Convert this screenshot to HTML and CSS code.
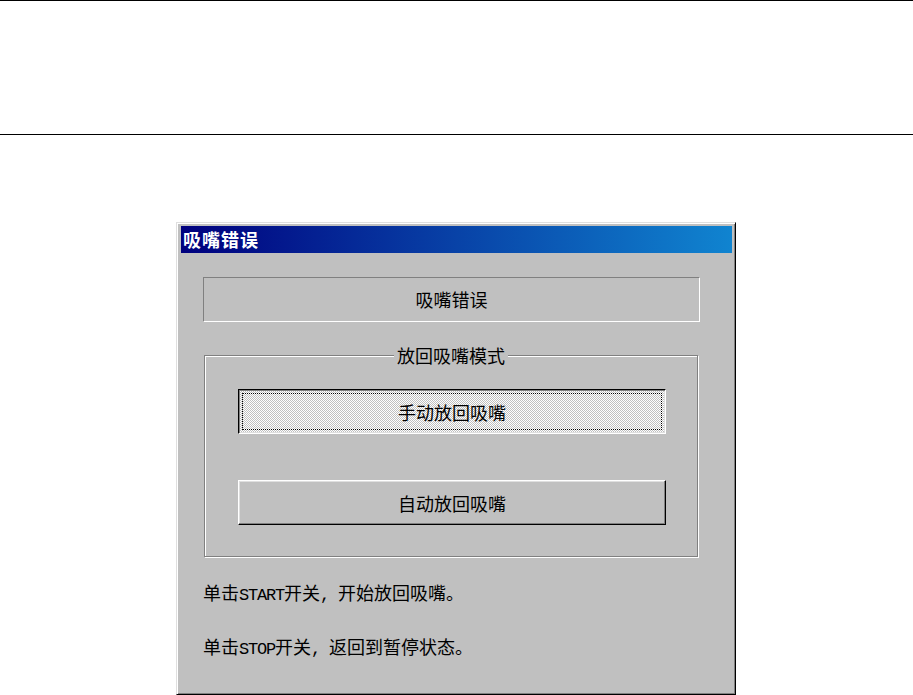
FILE: index.html
```html
<!DOCTYPE html>
<html lang="zh-CN">
<head>
<meta charset="utf-8">
<title>吸嘴错误</title>
<link rel="stylesheet" href="styles.css">
</head>
<body>
  <div class="header"></div>
  <div class="dialog">
    <div class="titlebar">吸嘴错误</div>
    <div class="body">
      <div class="status">吸嘴错误</div>
      <fieldset class="group">
        <legend class="group-title">放回吸嘴模式</legend>
        <button class="btn btn-pressed" type="button">手动放回吸嘴</button>
        <button class="btn btn-second" type="button">自动放回吸嘴</button>
      </fieldset>
      <p class="hint hint-first">单击<span class="asc">START</span>开关<span class="asc">, </span>开始放回吸嘴。</p>
      <p class="hint hint-second">单击<span class="asc">STOP</span>开关<span class="asc">, </span>返回到暂停状态。</p>
    </div>
  </div>
</body>
</html>
```
FILE: styles.css
```css
html, body {
  margin: 0;
  padding: 0;
  background: #fff;
}

body {
  font-family: "Noto Sans CJK SC", "Liberation Sans", sans-serif;
  color: #000;
  width: 913px;
  height: 695px;
  overflow: hidden;
}

.header {
  height: 133px;
  border-top: 1px solid #000;
  border-bottom: 1px solid #000;
}

.dialog {
  box-sizing: border-box;
  margin: 87px 0 0 176px;
  width: 560px;
  height: 473px;
  background: #c0c0c0;
  border: 1px solid;
  border-color: #dfdfdf #000 #000 #dfdfdf;
  box-shadow: inset 1px 1px #fff, inset -1px -1px #808080;
  padding: 3px 3px 0 4px;
  display: flex;
  flex-direction: column;
}

.titlebar {
  height: 27px;
  line-height: 27px;
  padding-left: 2px;
  background: linear-gradient(to right, #00007e, #1084d0);
  color: #fff;
  font-weight: 700;
  font-size: 18px;
  letter-spacing: 1px;
  white-space: nowrap;
}

.body {
  padding: 24px 0 0 22px;
  display: flex;
  flex-direction: column;
  align-items: flex-start;
}

.status {
  box-sizing: border-box;
  width: 497px;
  height: 45px;
  border: 1px solid;
  border-color: #808080 #fff #fff #808080;
  font-size: 18px;
  line-height: 43px;
  text-align: center;
}

.group {
  box-sizing: border-box;
  width: 494px;
  margin: 22px 0 0 1px;
  padding: 23px 0 31px 0;
  border: 1px solid #808080;
  box-shadow: inset 1px 1px #fff, 1px 1px #fff;
  min-width: 0;
}

.group-title {
  margin: 0 auto;
  padding: 0 3px;
  font-size: 18px;
  line-height: 22px;
  background: #c0c0c0;
}

.btn {
  display: block;
  box-sizing: border-box;
  width: 428px;
  height: 45px;
  margin: 0 0 0 33px;
  padding: 0;
  font-family: "Noto Sans CJK SC", "Liberation Sans", sans-serif;
  font-size: 18px;
  color: #000;
  background: #c0c0c0;
  border: 1px solid;
  border-color: #fff #000 #000 #fff;
  box-shadow: inset -1px -1px #808080, inset 1px 1px #dfdfdf;
}

.btn-pressed {
  border-color: #000 #fff #fff #000;
  box-shadow: inset 1px 1px #808080, inset -1px -1px #dfdfdf;
  background: repeating-conic-gradient(#c0c0c0 0 25%, #fff 0 50%) 0 0 / 2px 2px;
  outline: 1px dotted #000;
  outline-offset: -5px;
}

.btn-second {
  margin-top: 46px;
}

.hint {
  margin: 0;
  font-size: 18px;
  line-height: 22px;
  white-space: nowrap;
}

.hint-first {
  margin-top: 24px;
}

.hint-second {
  margin-top: 28px;
}

.asc {
  font-family: "Liberation Mono", monospace;
  font-size: 17px;
  letter-spacing: -1.2px;
}
```
